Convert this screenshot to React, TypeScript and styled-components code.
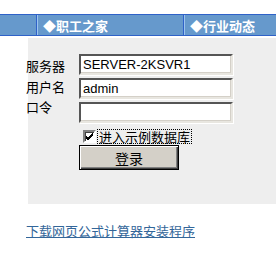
import styled, { createGlobalStyle } from "styled-components";

const GlobalStyle = createGlobalStyle`
    html, body {
        margin: 0;
        padding: 0;
        background: #ffffff;
    }
    body {
        font-family: "Liberation Sans", "Noto Sans CJK SC", sans-serif;
        font-size: 13px;
        color: #000000;
    }
`;

const cjk = `"Noto Sans CJK SC", "Liberation Sans", sans-serif`;

const App = () => {
    return (
        <Page>
            <GlobalStyle />
            <NavBar>
                <NavCell width={36} />
                <NavCell width={147} divider>◆职工之家</NavCell>
                <NavCell width={93} divider>◆行业动态</NavCell>
            </NavBar>

            <LoginPanel>
                <Fields>
                    <LabelColumn>
                        <FieldLabel>服务器</FieldLabel>
                        <FieldLabel>用户名</FieldLabel>
                        <FieldLabel>口令</FieldLabel>
                    </LabelColumn>
                    <InputColumn>
                        <TextInput defaultValue="SERVER-2KSVR1" />
                        <TextInput defaultValue="admin" />
                        <TextInput type="password" defaultValue="" />
                    </InputColumn>
                </Fields>

                <CheckRow>
                    <CheckBox>
                        <svg width="9" height="9" viewBox="0 0 9 9">
                            <path d="M1 4 L3 6 L8 1 M1 5 L3 7 L8 2 M1 6 L3 8 L8 3" stroke="#000" strokeWidth="1" fill="none" />
                        </svg>
                    </CheckBox>
                    <CheckLabel>进入示例数据库</CheckLabel>
                </CheckRow>

                <LoginButton>登录</LoginButton>
            </LoginPanel>

            <DownloadLink href="#">下载网页公式计算器安装程序</DownloadLink>
        </Page>
    );
};

const Page = styled.div`
    width: 276px;
    padding-top: 14px;
`;

const NavBar = styled.div`
    display: flex;
    height: 20px;
    background: #6699cc;
    border-top: 1px solid #2f62c8;
    border-bottom: 1px solid #2f62c8;
`;

const NavCell = styled.div<{ width: number; divider?: boolean }>`
    width: ${(p) => p.width}px;
    box-sizing: border-box;
    display: flex;
    align-items: center;
    padding-left: ${(p) => (p.divider ? 6 : 0)}px;
    border-left: ${(p) => (p.divider ? "1px solid #2f62c8" : "none")};
    box-shadow: ${(p) => (p.divider ? "inset 1px 0 0 #9cc4f0" : "none")};
    color: #ffffff;
    font-family: ${cjk};
    font-weight: 700;
    font-size: 13px;
    white-space: nowrap;
`;

const LoginPanel = styled.div`
    margin: 2px 0 0 28px;
    height: 150px;
    padding-top: 16px;
    background: #eeeeee;
`;

const Fields = styled.div`
    display: flex;
    margin-left: -2px;
`;

const LabelColumn = styled.div`
    width: 53px;
    display: flex;
    flex-direction: column;
    padding-top: 2px;
`;

const FieldLabel = styled.div`
    height: 20.5px;
    line-height: 20px;
    font-family: ${cjk};
    font-size: 13px;
`;

const InputColumn = styled.div`
    display: flex;
    flex-direction: column;
    gap: 3px;
`;

const TextInput = styled.input`
    box-sizing: border-box;
    width: 154px;
    height: 21px;
    margin: 0;
    padding: 0 0 0 2px;
    background: #ffffff;
    border-style: solid;
    border-width: 2px;
    border-color: #555555 #e8e6e0 #e8e6e0 #555555;
    box-shadow: inset -1px -1px 0 #d4d0c8, 1px 1px 0 #ffffff;
    font-family: "Liberation Sans", Arial, sans-serif;
    font-size: 13px;
    color: #000000;
    outline: none;
`;

const CheckRow = styled.div`
    display: flex;
    align-items: center;
    margin: 6px 0 0 55px;
    height: 15px;
    gap: 2px;
`;

const CheckBox = styled.span`
    box-sizing: border-box;
    width: 13px;
    height: 13px;
    display: flex;
    align-items: center;
    justify-content: center;
    background: #ffffff;
    border-style: solid;
    border-width: 2px;
    border-color: #808080 #ffffff #ffffff #808080;
    box-shadow: inset 1px 1px 0 #404040;
`;

const CheckLabel = styled.span`
    font-family: ${cjk};
    font-size: 13px;
    line-height: 13px;
    padding: 0 1px;
    outline: 1px dotted #000000;
`;

const LoginButton = styled.button`
    display: block;
    box-sizing: border-box;
    width: 100px;
    height: 25px;
    margin: 1px 0 0 51px;
    padding: 0;
    background: #d4d0c8;
    border: 1px solid #000000;
    box-shadow: inset 1px 1px 0 #ffffff, inset -1px -1px 0 #404040, inset -2px -2px 0 #808080;
    font-family: ${cjk};
    font-size: 14px;
    color: #000000;
`;

const DownloadLink = styled.a`
    display: inline-block;
    margin: 19px 0 0 26px;
    font-family: ${cjk};
    font-size: 13px;
    line-height: 16px;
    color: #336699;
    text-decoration: underline;
`;

export default App;
